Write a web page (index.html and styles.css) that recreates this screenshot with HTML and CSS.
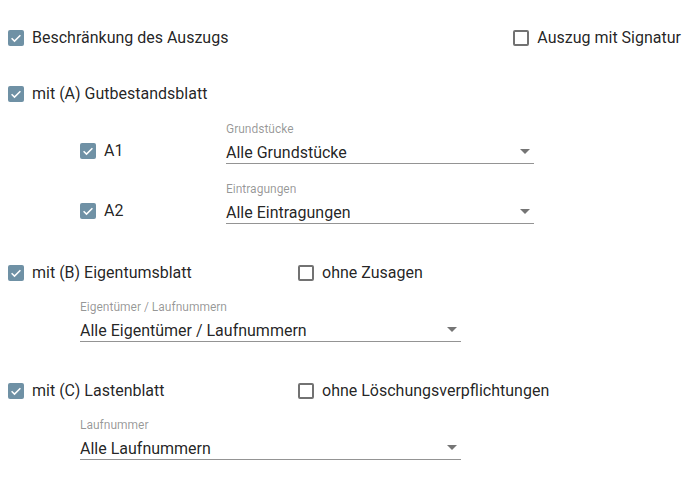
FILE: index.html
```html
<!DOCTYPE html>
<html lang="de">
<head>
<meta charset="utf-8">
<title>Auszug</title>
<link rel="stylesheet" href="styles.css">
</head>
<body>
<div class="form">
  <div class="row row-top">
    <label class="cbx"><span class="box checked"><svg viewBox="0 0 16 16"><path d="M3.6 8.3 L6.5 11.1 L12.4 5.2"/></svg></span><span>Beschränkung des Auszugs</span></label>
    <label class="cbx"><span class="box"></span><span>Auszug mit Signatur</span></label>
  </div>

  <div class="row row-a">
    <label class="cbx"><span class="box checked"><svg viewBox="0 0 16 16"><path d="M3.6 8.3 L6.5 11.1 L12.4 5.2"/></svg></span><span>mit (A) Gutbestandsblatt</span></label>
  </div>

  <div class="sub-row sub-first">
    <label class="cbx sub-cbx"><span class="box checked"><svg viewBox="0 0 16 16"><path d="M3.6 8.3 L6.5 11.1 L12.4 5.2"/></svg></span><span>A1</span></label>
    <div class="field field-a">
      <div class="field-label">Grundstücke</div>
      <div class="field-value"><span>Alle Grundstücke</span><span class="arrow"></span></div>
    </div>
  </div>

  <div class="sub-row sub-second">
    <label class="cbx sub-cbx"><span class="box checked"><svg viewBox="0 0 16 16"><path d="M3.6 8.3 L6.5 11.1 L12.4 5.2"/></svg></span><span>A2</span></label>
    <div class="field field-a">
      <div class="field-label">Eintragungen</div>
      <div class="field-value"><span>Alle Eintragungen</span><span class="arrow"></span></div>
    </div>
  </div>

  <div class="row row-section">
    <label class="cbx col-main"><span class="box checked"><svg viewBox="0 0 16 16"><path d="M3.6 8.3 L6.5 11.1 L12.4 5.2"/></svg></span><span>mit (B) Eigentumsblatt</span></label>
    <label class="cbx"><span class="box"></span><span>ohne Zusagen</span></label>
  </div>
  <div class="field field-wide">
    <div class="field-label">Eigentümer / Laufnummern</div>
    <div class="field-value"><span>Alle Eigentümer / Laufnummern</span><span class="arrow"></span></div>
  </div>

  <div class="row row-section">
    <label class="cbx col-main"><span class="box checked"><svg viewBox="0 0 16 16"><path d="M3.6 8.3 L6.5 11.1 L12.4 5.2"/></svg></span><span>mit (C) Lastenblatt</span></label>
    <label class="cbx"><span class="box"></span><span>ohne Löschungsverpflichtungen</span></label>
  </div>
  <div class="field field-wide">
    <div class="field-label">Laufnummer</div>
    <div class="field-value"><span>Alle Laufnummern</span><span class="arrow"></span></div>
  </div>
</div>
</body>
</html>
```

FILE: styles.css
```css
html, body {
  margin: 0;
  padding: 0;
  background: #ffffff;
}

body {
  font-family: Roboto, "Noto Sans", Arial, sans-serif;
  font-size: 16px;
  color: rgba(0, 0, 0, 0.87);
}

.form {
  padding: 18px 7px 0 8px;
  display: flex;
  flex-direction: column;
}

.row {
  display: flex;
  align-items: center;
  height: 40px;
}

.row-top {
  justify-content: space-between;
}

.row-a {
  margin-top: 16px;
}

.row-section {
  margin-top: 29px;
}

.col-main {
  width: 290px;
}

.cbx {
  display: flex;
  align-items: center;
  gap: 8px;
  line-height: 20px;
  white-space: nowrap;
}

.box {
  width: 16px;
  height: 16px;
  box-sizing: border-box;
  border: 2px solid #727272;
  border-radius: 2px;
  flex: 0 0 auto;
  display: block;
}

.box.checked {
  border: none;
  background: #6f91a5;
}

.box svg {
  display: block;
  width: 16px;
  height: 16px;
  fill: none;
  stroke: #ffffff;
  stroke-width: 1.5;
}

.sub-row {
  display: flex;
  align-items: flex-end;
  margin-left: 72px;
}

.sub-first {
  margin-top: 8px;
}

.sub-second {
  margin-top: 18px;
}

.sub-cbx {
  width: 146px;
  height: 26px;
}

.field {
  display: flex;
  flex-direction: column;
}

.field-a {
  width: 308px;
}

.field-wide {
  width: 381px;
  margin-left: 72px;
  margin-top: 7px;
}

.field-label {
  font-size: 12px;
  line-height: 14px;
  color: rgba(0, 0, 0, 0.42);
}

.field-value {
  display: flex;
  justify-content: space-between;
  align-items: center;
  padding-top: 7px;
  height: 20px;
  line-height: 20px;
  border-bottom: 1px solid rgba(0, 0, 0, 0.42);
}

.arrow {
  width: 0;
  height: 0;
  border-left: 5px solid transparent;
  border-right: 5px solid transparent;
  border-top: 5px solid rgba(0, 0, 0, 0.54);
  margin-right: 4px;
  margin-bottom: 3px;
}
```
